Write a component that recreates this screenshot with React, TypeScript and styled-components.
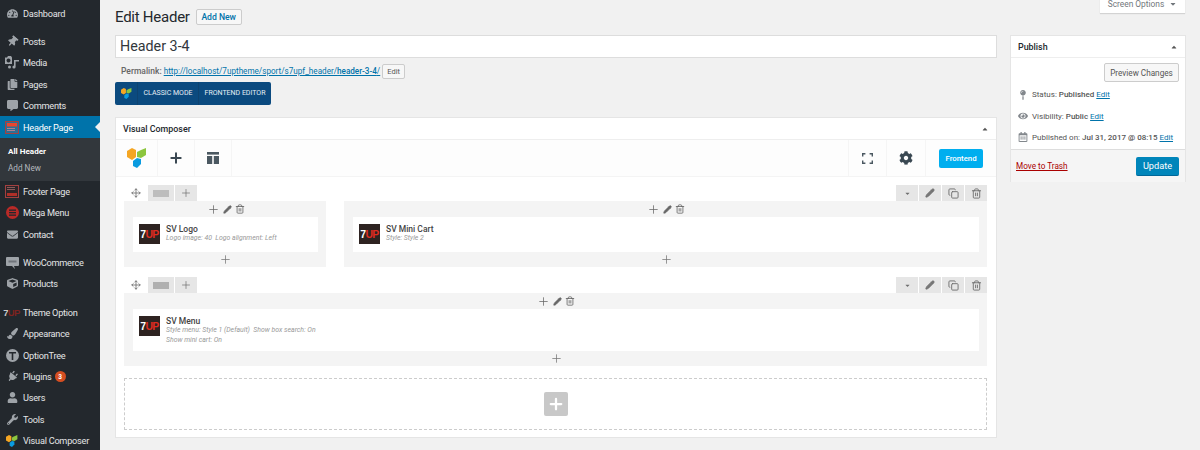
import React from 'react';
import styled, { createGlobalStyle } from 'styled-components';
import {
  FaTachometerAlt, FaThumbtack, FaCopy, FaCommentAlt, FaEnvelope, FaCube,
  FaPaintBrush, FaPlug, FaUser, FaWrench, FaCog, FaCaretUp, FaCaretDown, FaEye, FaMapPin, FaRegCalendarAlt,
} from 'react-icons/fa';
import { Plus, Pencil, Copy, Trash2, Move } from 'lucide-react';

const Global = createGlobalStyle`
  html, body { margin: 0; padding: 0; background: #f1f1f1; }
  body { font-family: Roboto, "Noto Sans", sans-serif; font-size: 9.75px; color: #444; width: 1200px; height: 450px; overflow: hidden; }
  a { color: #0073aa; }
`;

const Page = styled.div`
  display: flex;
  width: 1200px;
  height: 450px;
  overflow: hidden;
`;

const Sidebar = styled.nav`
  width: 100px;
  height: 450px;
  flex: none;
  background: #23282d;
  padding-top: 2.4px;
  box-sizing: border-box;
`;

const MenuRow = styled.div<{ $active?: boolean; $gap?: number }>`
  display: flex;
  align-items: center;
  height: 21.4px;
  margin-top: ${p => p.$gap ?? 0}px;
  position: relative;
  font-size: 9.2px;
  letter-spacing: -0.25px;
  background: ${p => (p.$active ? '#0073aa' : 'transparent')};
  color: ${p => (p.$active ? '#fff' : '#e4e5e6')};
  white-space: nowrap;
  ${p =>
    p.$active &&
    `&::after {
      content: '';
      position: absolute;
      right: 0;
      top: 6px;
      border: 5px solid transparent;
      border-right-color: #f1f1f1;
      border-left: 0;
    }`}
`;

const MenuIcon = styled.span<{ $tilt?: number }>`
  width: 23px;
  flex: none;
  display: flex;
  justify-content: center;
  color: #9ea3a8;
  font-size: 11px;
  box-sizing: border-box;
  padding-left: 1px;
  & svg { transform: rotate(${p => p.$tilt ?? 0}deg); }
`;

const SevenUpMenu = styled.span`
  width: 23px;
  flex: none;
  text-align: center;
  font-family: "Liberation Sans", sans-serif;
  font-weight: 700;
  font-size: 9.5px;
  color: #c9c9c9;
  letter-spacing: -0.6px;
  box-sizing: border-box;
  & b { color: #7d2320; }
`;

const Badge = styled.span`
  display: inline-flex;
  align-items: center;
  justify-content: center;
  width: 11px;
  height: 11px;
  margin-left: 3px;
  border-radius: 50%;
  background: #d54e21;
  color: #fff;
  font-size: 6.5px;
  font-weight: 700;
`;

const SubMenu = styled.div`
  background: #32373c;
  padding: 5px 0 5px 8px;
  height: 43px;
  box-sizing: border-box;
`;

const SubItem = styled.div<{ $current?: boolean }>`
  height: 17px;
  line-height: 17px;
  font-size: ${p => (p.$current ? 8.1 : 8.2)}px;
  font-weight: ${p => (p.$current ? 700 : 400)};
  color: ${p => (p.$current ? '#fff' : '#b4b9be')};
`;

const Content = styled.main`
  flex: 1;
  padding-left: 15px;
  padding-right: 14px;
  display: grid;
  grid-template-columns: 882px 176px;
  column-gap: 13px;
  align-content: start;
  position: relative;
`;

const ScreenOptions = styled.div`
  position: absolute;
  top: -1px;
  right: 15px;
  width: 85px;
  height: 13.5px;
  box-sizing: border-box;
  background: #fff;
  box-shadow: 0 1px 1px rgba(0, 0, 0, 0.12);
  display: flex;
  align-items: center;
  justify-content: center;
  gap: 5px;
  padding-bottom: 3px;
  line-height: 10px;
  font-size: 8.4px;
  color: #72777c;
`;

const Heading = styled.div`
  grid-column: 1 / -1;
  display: flex;
  align-items: center;
  height: 35px;
  gap: 6px;
  padding-bottom: 2px;
  box-sizing: border-box;
`;

const Title = styled.h1`
  margin: 0;
  font-size: 15px;
  letter-spacing: -0.25px;
  font-weight: 400;
  color: #23282d;
`;

const AddNew = styled.span`
  height: 16px;
  width: 46px;
  display: flex;
  align-items: center;
  justify-content: center;
  border: 1px solid #ccc;
  border-radius: 2px;
  box-sizing: border-box;
  background: #f7f7f7;
  color: #0073aa;
  font-size: 8.6px;
  font-weight: 500;
`;

const MainColumn = styled.div`
  min-width: 0;
`;

const TitleInput = styled.div`
  height: 23px;
  border: 1px solid #ddd;
  box-sizing: border-box;
  background: #fff;
  font-size: 14.3px;
  line-height: 21px;
  padding-left: 4px;
  color: #32373c;
`;

const Permalink = styled.div`
  display: flex;
  align-items: center;
  height: 15px;
  margin-top: 5.5px;
  padding-left: 6px;
  gap: 2px;
  font-size: 8.15px;
  color: #666;
  & a { text-decoration: underline; }
  & strong { font-weight: 500; font-size: 8.5px; }
  & b { font-weight: 500; }
`;

const SmallButton = styled.span`
  width: 23px;
  height: 15px;
  display: flex;
  align-items: center;
  justify-content: center;
  box-sizing: border-box;
  border: 1px solid #ccc;
  border-radius: 2px;
  background: #f7f7f7;
  font-size: 7.5px;
  color: #555;
`;

const ModeBar = styled.div`
  display: flex;
  width: 156px;
  height: 23px;
  margin-top: 3px;
  background: #0b4a7f;
  border-radius: 2px;
  color: #e6eef5;
  font-size: 7px;
  align-items: stretch;
`;

const ModeCell = styled.span<{ $w: number }>`
  width: ${p => p.$w}px;
  flex: none;
  display: flex;
  align-items: center;
  justify-content: center;
  border-right: 1px solid #0d4370;
  box-sizing: border-box;
  &:last-child { border-right: 0; }
`;

const Box = styled.section`
  background: #fff;
  border: 1px solid #e5e5e5;
  box-sizing: border-box;
`;

const ComposerBox = styled(Box)`
  margin-top: 12.5px;
  height: 321px;
`;

const BoxHeader = styled.div`
  display: flex;
  align-items: center;
  justify-content: space-between;
  height: 21px;
  padding: 0 7px;
  border-bottom: 1px solid #eee;
  font-size: 8.9px;
  font-weight: 500;
  color: #23282d;
  & svg { color: #555; font-size: 8px; }
`;

const Toolbar = styled.div`
  display: flex;
  align-items: stretch;
  height: 36px;
  background: #fdfdfd;
  border-bottom: 1px solid #f4f4f4;
`;

const ToolCell = styled.div<{ $w: number }>`
  width: ${p => p.$w}px;
  flex: none;
  display: flex;
  align-items: center;
  justify-content: center;
  border-right: 1px solid #f5f5f5;
  box-sizing: border-box;
  color: #3a4852;
`;

const ToolSpacer = styled.div`
  flex: 1;
  border-right: 1px solid #f5f5f5;
`;

const FrontendCell = styled.div`
  width: 70px;
  flex: none;
  padding-left: 13px;
  box-sizing: border-box;
  display: flex;
  align-items: center;
`;

const FrontendButton = styled.span`
  width: 44px;
  height: 19px;
  background: #00aeef;
  color: #fff;
  border-radius: 2px;
  display: flex;
  align-items: center;
  justify-content: center;
  font-size: 7.8px;
  font-weight: 500;
`;

const Canvas = styled.div`
  padding: 8px 9px 0 8px;
`;

const VcRow = styled.div`
  margin-bottom: 10px;
`;

const RowControls = styled.div`
  display: flex;
  justify-content: space-between;
  height: 16px;
`;

const ControlGroup = styled.div`
  display: flex;
  gap: 1px;
`;

const ControlButton = styled.span<{ $w?: number; $plain?: boolean }>`
  width: ${p => p.$w ?? 22}px;
  height: 16px;
  display: flex;
  align-items: center;
  justify-content: center;
  background: ${p => (p.$plain ? 'transparent' : '#e6e6e6')};
  color: #6f6f6f;
`;

const LayoutGlyph = styled.span<{ $dark?: boolean }>`
  width: 16px;
  height: 7px;
  background: ${p => (p.$dark ? '#b0b0b0' : '#bdbdbd')};
`;

const Columns = styled.div`
  display: flex;
  justify-content: space-between;
`;

const Column = styled.div<{ $w: number; $h: number }>`
  width: ${p => p.$w}px;
  min-height: ${p => p.$h}px;
  background: #f4f4f4;
  padding: 0 8px 0 9px;
  box-sizing: border-box;
  display: flex;
  flex-direction: column;
`;

const ColumnTools = styled.div`
  height: 16px;
  display: flex;
  align-items: center;
  justify-content: center;
  gap: 3px;
  color: #666;
`;

const ElementCard = styled.div<{ $h: number }>`
  display: flex;
  align-items: flex-start;
  gap: 6px;
  height: ${p => p.$h}px;
  background: #fff;
  padding: 7px 6px 0 6px;
  box-sizing: border-box;
`;

const LogoTile = styled.span`
  width: 21px;
  height: 20px;
  flex: none;
  background: #2e2321;
  display: flex;
  align-items: center;
  justify-content: center;
  font-family: "Liberation Sans", sans-serif;
  font-weight: 700;
  font-size: 10.5px;
  letter-spacing: -0.7px;
  color: #fff;
  box-sizing: border-box;
  & b { color: #e02b20; }
`;

const ElementName = styled.div`
  font-size: 8.5px;
  font-weight: 500;
  line-height: 10px;
  color: #444;
`;

const ElementMeta = styled.div`
  font-size: 6.9px;
  font-style: italic;
  line-height: 9.5px;
  color: #999;
`;

const ColumnAdd = styled.div`
  flex: 1;
  display: flex;
  align-items: center;
  justify-content: center;
  min-height: 15px;
  color: #777;
`;

const AddArea = styled.div`
  height: 52px;
  margin-top: 12px;
  border: 1px dashed #ccc;
  box-sizing: border-box;
  display: flex;
  align-items: center;
  justify-content: center;
`;

const AddAreaButton = styled.span`
  width: 24px;
  height: 24px;
  border-radius: 2px;
  background: #c8c8c8;
  color: #fff;
  display: flex;
  align-items: center;
  justify-content: center;
`;

const SideColumn = styled.aside`
  min-width: 0;
`;

const PublishBox = styled(Box)`
  height: 147px;
`;

const PublishBody = styled.div`
  padding: 5px 6px 0 6px;
  height: 91px;
  box-sizing: border-box;
  display: flex;
  flex-direction: column;
`;

const PreviewButton = styled.span`
  align-self: flex-end;
  width: 75px;
  height: 19px;
  border: 1px solid #ccc;
  border-radius: 2px;
  box-sizing: border-box;
  background: #f7f7f7;
  display: flex;
  align-items: center;
  justify-content: center;
  font-size: 8.2px;
  color: #555;
`;

const MetaRow = styled.div`
  display: flex;
  align-items: center;
  height: 21.4px;
  font-size: 8px;
  white-space: nowrap;
  color: #555;
  & strong { font-weight: 500; margin: 0 2px; }
  & a { text-decoration: underline; }
`;

const MetaFirst = styled(MetaRow)`
  margin-top: 2px;
`;

const MetaIcon = styled.span`
  width: 12px;
  flex: none;
  color: #82878c;
  font-size: 10px;
  display: flex;
  justify-content: center;
  margin-right: 3px;
`;

const PublishFooter = styled.div`
  height: 33px;
  background: #f5f5f5;
  border-top: 1px solid #ddd;
  box-sizing: border-box;
  display: flex;
  align-items: center;
  justify-content: space-between;
  padding: 0 6px 0 5px;
  & a { color: #a00; font-size: 8.2px; text-decoration: underline; }
`;

const UpdateButton = styled.span`
  width: 43px;
  height: 19px;
  border-radius: 2px;
  background: #0085ba;
  border-bottom: 1px solid #006799;
  box-sizing: border-box;
  color: #fff;
  font-size: 9.2px;
  display: flex;
  align-items: center;
  justify-content: center;
`;

const VcLogo = ({ size = 20 }: { size?: number }) => (
  <svg width={size} height={size} viewBox="0 0 20 20">
    <path d="M0 3l5-3 4 2v7l-4 3-5-3z" fill="#f5a623" />
    <path d="M10 4l4-2 5-2v7l-5 3-4-1z" fill="#8cc63f" />
    <path d="M6 13l4-3 4 1v5l-4 4-4-2z" fill="#0a9be0" />
  </svg>
);

const BoxPageIcon = ({ top }: { top?: boolean }) => (
  <svg width="14" height="13" viewBox="0 0 14 13">
    <rect x="0.5" y="0.5" width="13" height="12" fill={top ? '#2f6f93' : '#2c2528'} stroke="#a34040" />
    {top ? (
      <>
        <rect x="2" y="2" width="10" height="3.5" fill="#e9452f" />
        <rect x="2" y="7" width="8" height="1" fill="#b08090" />
        <rect x="2" y="9" width="8" height="1" fill="#b08090" />
      </>
    ) : (
      <>
        <rect x="2" y="2" width="8" height="1" fill="#8a5a5a" />
        <rect x="2" y="4" width="8" height="1" fill="#8a5a5a" />
        <rect x="2" y="8" width="10" height="3" fill="#b02f28" />
      </>
    )}
  </svg>
);

const MegaIcon = () => (
  <svg width="13" height="13" viewBox="0 0 13 13">
    <circle cx="6.5" cy="6.5" r="6.5" fill="#b92a27" />
    <rect x="3" y="3.5" width="7" height="1.3" fill="#23282d" />
    <rect x="3" y="6" width="7" height="1.3" fill="#23282d" />
    <rect x="3" y="8.5" width="7" height="1.3" fill="#23282d" />
  </svg>
);

const MediaIcon = () => (
  <svg width="14" height="13" viewBox="0 0 14 13" fill="#9ea3a8">
    <path d="M0 1.5h2L3 0h3l1 1.5V8H0zM3.5 2.6a2 2 0 1 0 .01 0z" fillRule="evenodd" />
    <path d="M9 4h5v1.5h-3.4V11a1.6 1.6 0 1 1-1.6-1.6z" />
    <circle cx="4.5" cy="11" r="1.5" />
  </svg>
);

const WooIcon = () => (
  <svg width="13" height="12" viewBox="0 0 13 12">
    <path d="M1 0h11a1 1 0 0 1 1 1v7a1 1 0 0 1-1 1H8l1 3-3-3H1a1 1 0 0 1-1-1V1a1 1 0 0 1 1-1z" fill="#9ea3a8" />
    <rect x="2.5" y="3.5" width="8" height="2" fill="#6f747a" />
  </svg>
);

const TreeIcon = () => (
  <svg width="13" height="13" viewBox="0 0 13 13">
    <circle cx="6.5" cy="6.5" r="6.5" fill="#9ea3a8" />
    <rect x="3" y="3" width="7" height="1.5" fill="#23282d" />
    <rect x="5.7" y="3" width="1.6" height="8" fill="#23282d" />
  </svg>
);

const LayoutIcon = () => (
  <svg width="12" height="12" viewBox="0 0 12 12" fill="#4b5861">
    <rect width="12" height="2.6" />
    <rect y="4" width="5.2" height="8" />
    <rect x="6.8" y="4" width="5.2" height="8" />
  </svg>
);

const CornersIcon = () => (
  <svg width="11" height="11" viewBox="0 0 11 11" fill="none" stroke="#4b5861" strokeWidth="1.4">
    <path d="M0.7 3.4V0.7H3.4M7.6 0.7h2.7v2.7M10.3 7.6v2.7H7.6M3.4 10.3H0.7V7.6" />
  </svg>
);

const SevenUp = () => (
  <LogoTile>
    7<b>UP</b>
  </LogoTile>
);

const RowBar = ({ dark }: { dark?: boolean }) => (
  <RowControls>
    <ControlGroup>
      <ControlButton $plain $w={23}>
        <Move size={10} />
      </ControlButton>
      <ControlButton $w={26}>
        <LayoutGlyph $dark={dark} />
      </ControlButton>
      <ControlButton>
        <Plus size={12} strokeWidth={1.4} />
      </ControlButton>
    </ControlGroup>
    <ControlGroup>
      <ControlButton>
        <FaCaretDown size={7} />
      </ControlButton>
      <ControlButton>
        <Pencil size={10} fill="#777" />
      </ControlButton>
      <ControlButton>
        <Copy size={11} />
      </ControlButton>
      <ControlButton>
        <Trash2 size={11} />
      </ControlButton>
    </ControlGroup>
  </RowControls>
);

const ColTools = () => (
  <ColumnTools>
    <Plus size={13} strokeWidth={1.4} />
    <Pencil size={9} fill="#666" />
    <Trash2 size={10} />
  </ColumnTools>
);

export default function App() {
  return (
    <Page>
      <Global />
      <Sidebar>
        <MenuRow><MenuIcon><FaTachometerAlt /></MenuIcon>Dashboard</MenuRow>
        <MenuRow $gap={7}><MenuIcon $tilt={40}><FaThumbtack /></MenuIcon>Posts</MenuRow>
        <MenuRow><MenuIcon><MediaIcon /></MenuIcon>Media</MenuRow>
        <MenuRow><MenuIcon><FaCopy /></MenuIcon>Pages</MenuRow>
        <MenuRow><MenuIcon><FaCommentAlt /></MenuIcon>Comments</MenuRow>
        <MenuRow $active><MenuIcon><BoxPageIcon top /></MenuIcon>Header Page</MenuRow>
        <SubMenu>
          <SubItem $current>All Header</SubItem>
          <SubItem>Add New</SubItem>
        </SubMenu>
        <MenuRow><MenuIcon><BoxPageIcon /></MenuIcon>Footer Page</MenuRow>
        <MenuRow><MenuIcon><MegaIcon /></MenuIcon>Mega Menu</MenuRow>
        <MenuRow><MenuIcon><FaEnvelope /></MenuIcon>Contact</MenuRow>
        <MenuRow $gap={7}><MenuIcon><WooIcon /></MenuIcon>WooCommerce</MenuRow>
        <MenuRow><MenuIcon><FaCube /></MenuIcon>Products</MenuRow>
        <MenuRow $gap={7}><SevenUpMenu>7<b>UP</b></SevenUpMenu>Theme Option</MenuRow>
        <MenuRow><MenuIcon><FaPaintBrush /></MenuIcon>Appearance</MenuRow>
        <MenuRow><MenuIcon><TreeIcon /></MenuIcon>OptionTree</MenuRow>
        <MenuRow><MenuIcon $tilt={40}><FaPlug /></MenuIcon>Plugins<Badge>3</Badge></MenuRow>
        <MenuRow><MenuIcon><FaUser /></MenuIcon>Users</MenuRow>
        <MenuRow><MenuIcon><FaWrench /></MenuIcon>Tools</MenuRow>
        <MenuRow><MenuIcon><VcLogo size={12} /></MenuIcon>Visual Composer</MenuRow>
      </Sidebar>
      <Content>
        <ScreenOptions>Screen Options <FaCaretDown size={8} /></ScreenOptions>
        <Heading>
          <Title>Edit Header</Title>
          <AddNew>Add New</AddNew>
        </Heading>
        <MainColumn>
          <TitleInput>Header 3-4</TitleInput>
          <Permalink>
            <strong>Permalink:</strong>
            <a>http://localhost/7uptheme/sport/s7upf_header/<b>header-3-4</b>/</a>
            <SmallButton>Edit</SmallButton>
          </Permalink>
          <ModeBar>
            <ModeCell $w={23}><VcLogo size={11} /></ModeCell>
            <ModeCell $w={61}>CLASSIC MODE</ModeCell>
            <ModeCell $w={72}>FRONTEND EDITOR</ModeCell>
          </ModeBar>
          <ComposerBox>
            <BoxHeader>Visual Composer <FaCaretUp /></BoxHeader>
            <Toolbar>
              <ToolCell $w={42}><VcLogo /></ToolCell>
              <ToolCell $w={37}><Plus size={16} strokeWidth={3} /></ToolCell>
              <ToolCell $w={37}><LayoutIcon /></ToolCell>
              <ToolSpacer />
              <ToolCell $w={38}><CornersIcon /></ToolCell>
              <ToolCell $w={39}><FaCog size={14} /></ToolCell>
              <FrontendCell><FrontendButton>Frontend</FrontendButton></FrontendCell>
            </Toolbar>
            <Canvas>
              <VcRow>
                <RowBar />
                <Columns>
                  <Column $w={202} $h={66}>
                    <ColTools />
                    <ElementCard $h={35}>
                      <SevenUp />
                      <div>
                        <ElementName>SV Logo</ElementName>
                        <ElementMeta>Logo image: 40&nbsp; Logo alignment: Left</ElementMeta>
                      </div>
                    </ElementCard>
                    <ColumnAdd><Plus size={13} strokeWidth={1.4} /></ColumnAdd>
                  </Column>
                  <Column $w={643} $h={66}>
                    <ColTools />
                    <ElementCard $h={35}>
                      <SevenUp />
                      <div>
                        <ElementName>SV Mini Cart</ElementName>
                        <ElementMeta>Style: Style 2</ElementMeta>
                      </div>
                    </ElementCard>
                    <ColumnAdd><Plus size={13} strokeWidth={1.4} /></ColumnAdd>
                  </Column>
                </Columns>
              </VcRow>
              <VcRow>
                <RowBar dark />
                <Column $w={863} $h={72}>
                  <ColTools />
                  <ElementCard $h={42}>
                    <SevenUp />
                    <div>
                      <ElementName>SV Menu</ElementName>
                      <ElementMeta>
                        Style menu: Style 1 (Default)&nbsp; Show box search: On
                        <br />
                        Show mini cart: On
                      </ElementMeta>
                    </div>
                  </ElementCard>
                  <ColumnAdd><Plus size={13} strokeWidth={1.4} /></ColumnAdd>
                </Column>
              </VcRow>
              <AddArea>
                <AddAreaButton><Plus size={18} strokeWidth={3} /></AddAreaButton>
              </AddArea>
            </Canvas>
          </ComposerBox>
        </MainColumn>
        <SideColumn>
          <PublishBox>
            <BoxHeader>Publish <FaCaretUp /></BoxHeader>
            <PublishBody>
              <PreviewButton>Preview Changes</PreviewButton>
              <MetaFirst><MetaIcon><FaMapPin /></MetaIcon>Status:<strong>Published</strong><a>Edit</a></MetaFirst>
              <MetaRow><MetaIcon><FaEye /></MetaIcon>Visibility:<strong>Public</strong><a>Edit</a></MetaRow>
              <MetaRow><MetaIcon><FaRegCalendarAlt /></MetaIcon>Published on:<strong>Jul 31, 2017 @ 08:15</strong><a>Edit</a></MetaRow>
            </PublishBody>
            <PublishFooter>
              <a>Move to Trash</a>
              <UpdateButton>Update</UpdateButton>
            </PublishFooter>
          </PublishBox>
        </SideColumn>
      </Content>
    </Page>
  );
}
